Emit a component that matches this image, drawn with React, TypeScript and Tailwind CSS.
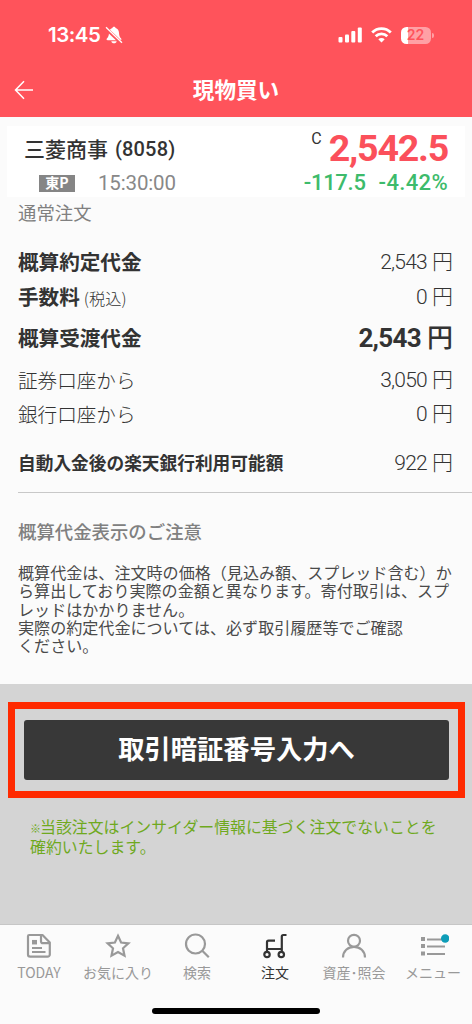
import type { ReactNode } from "react";
import clsx from "clsx";

interface CostRow {
  label: string;
  note?: string;
  value: string;
  row: string;
  labelClass: string;
  valueClass: string;
  yenClass: string;
}

const labelBold = "text-[20.6px] font-bold";
const labelLight = "text-[19.6px] font-light";
const valueLight = "text-[21px] font-light tracking-[-0.75px]";
const yenLight = "ml-[5px] text-[21px] font-light";

const costRows: CostRow[] = [
  { label: "概算約定代金", value: "2,543", row: "h-9", labelClass: labelBold, valueClass: valueLight, yenClass: yenLight },
  { label: "手数料", note: "(税込)", value: "0", row: "h-[34px]", labelClass: labelBold, valueClass: valueLight, yenClass: yenLight },
  {
    label: "概算受渡代金",
    value: "2,543",
    row: "h-12",
    labelClass: labelBold,
    valueClass: "text-[26px] font-bold tracking-[-0.7px]",
    yenClass: "ml-1.5 text-[26px] font-medium",
  },
  { label: "証券口座から", value: "3,050", row: "h-9", labelClass: labelLight, valueClass: valueLight, yenClass: yenLight },
  { label: "銀行口座から", value: "0", row: "h-[33px]", labelClass: labelLight, valueClass: valueLight, yenClass: yenLight },
  {
    label: "自動入金後の楽天銀行利用可能額",
    value: "922",
    row: "h-16",
    labelClass: "text-[17.7px] font-bold",
    valueClass: valueLight,
    yenClass: yenLight,
  },
];

function TodayIcon() {
  return (
    <svg width="26" height="26" viewBox="0 0 26 26" fill="none" stroke="currentColor" strokeWidth="2.2" strokeLinejoin="round">
      <path d="M3.2 2h13.3l7.3 7.4v12a2.3 2.3 0 0 1-2.3 2.3H4.2A2.2 2.2 0 0 1 2 21.5V3.2A1.2 1.2 0 0 1 3.2 2Z" />
      <path d="M15 2.500v5.700a2 2 0 0 0 2 2h6.500" />
      <path d="M6 15h10M6 19h13.500" />
      <path d="M6 9.200h5" strokeWidth="4.5" strokeLinejoin="miter" />
    </svg>
  );
}

function StarIcon() {
  return (
    <svg width="26" height="26" viewBox="0 0 26 26" fill="none" stroke="currentColor" strokeWidth="2.2">
      <path d="m13 2.800 3.100 6.700 7.300.8-5.400 5 1.500 7.400-6.500-3.700-6.500 3.700 1.500-7.400-5.400-5 7.300-.8Z" />
    </svg>
  );
}

function SearchIcon() {
  return (
    <svg width="26" height="26" viewBox="0 0 26 26" fill="none" stroke="currentColor" strokeWidth="2.2">
      <circle cx="11.5" cy="11" r="9.5" />
      <path d="m18 17.500 6.800 6.800" />
    </svg>
  );
}

function CartIcon() {
  return (
    <svg width="26" height="26" viewBox="0 0 26 26" fill="none" stroke="currentColor" strokeWidth="2.2">
      <path d="M24.500 2h-3.200a1.500 1.500 0 0 0-1.500 1.500v15.300M13 7.700H6.500A1.500 1.500 0 0 0 5 9.200v9.600M5 16h14.800" />
      <circle cx="5" cy="21.500" r="2.700" />
      <circle cx="19.300" cy="21.500" r="2.700" />
    </svg>
  );
}

function PersonIcon() {
  return (
    <svg width="26" height="26" viewBox="0 0 26 26" fill="none" stroke="currentColor" strokeWidth="2.2">
      <circle cx="13" cy="7.800" r="6" />
      <path d="M2 24.500c0-6.200 4.900-10.700 11-10.700s11 4.500 11 10.700" />
    </svg>
  );
}

function MenuIcon() {
  return (
    <svg width="32" height="26" viewBox="0 0 32 26" fill="none" stroke="currentColor" strokeWidth="2">
      <path d="M10 6.500h18M10 13.500h18M10 21h18" />
      <path d="M4 6h4M4 13h4M4 20.500h4" strokeWidth="3.800" />
      <circle cx="28.200" cy="5.500" r="4.200" fill="#0e9db8" stroke="none" />
    </svg>
  );
}

const tabs: { label: string; icon: ReactNode; width: string; active?: boolean }[] = [
  { label: "TODAY", icon: <TodayIcon />, width: "w-[78px]" },
  { label: "お気に入り", icon: <StarIcon />, width: "w-20" },
  { label: "検索", icon: <SearchIcon />, width: "w-[78px]" },
  { label: "注文", icon: <CartIcon />, width: "w-[78px]", active: true },
  { label: "資産･照会", icon: <PersonIcon />, width: "w-20" },
  { label: "メニュー", icon: <MenuIcon />, width: "w-[78px]" },
];

function StatusBar() {
  return (
    <div className="flex h-[70px] items-center justify-between pl-12 pr-[38px]">
      <div className="flex items-center gap-[5px]">
        <span className="font-[Inter] text-[20.5px] leading-none font-semibold tracking-[-0.5px]">13:45</span>
        <svg width="18" height="18" viewBox="0 0 18 18" fill="currentColor">
          <path d="M9 .8c.8 0 1.400.5 1.600 1.200 2.200.7 3.300 2.500 3.400 4.800.1 3.300.8 4.400 2.100 5.800.7.8.3 1.700-.8 1.700H2.700c-1.100 0-1.500-.9-.8-1.700C3.200 11.200 3.900 10.100 4 6.800c.1-2.300 1.200-4.100 3.400-4.800C7.600 1.300 8.200.8 9 .8ZM6.300 15.200h5.400c-.3 1.300-1.300 2.100-2.700 2.100s-2.400-.8-2.700-2.100Z" />
          <path d="m1 2.500 15.500 14.500" stroke="#ff535b" strokeWidth="3.500" />
          <path d="m1 1.300 16 15.500" stroke="currentColor" strokeWidth="1.300" />
        </svg>
      </div>
      <div className="flex items-center">
        <svg width="25" height="16" viewBox="0 0 25 16" fill="currentColor">
          <rect x="0.500" y="10" width="4" height="5.500" rx="1" />
          <rect x="7" y="7.500" width="4" height="8" rx="1" />
          <rect x="13.300" y="4" width="4" height="11.500" rx="1" />
          <rect x="19.800" y="0.500" width="4" height="15" rx="1" />
        </svg>
        <svg className="ml-2" width="21" height="16" viewBox="0 0 21 16" fill="none" stroke="currentColor" strokeWidth="2.800">
          <path d="M1.200 5.500c5.200-5.100 13.400-5.100 18.600 0M4.700 9.200c3.200-3.200 8.400-3.200 11.600 0" />
          <path d="m10.500 15.500-3.200-3.300c1.800-1.600 4.600-1.600 6.400 0Z" fill="currentColor" stroke="none" />
        </svg>
        <div className="ml-[9px] flex h-[17px] w-[30px] items-center justify-center rounded-[5.5px] bg-linear-to-r from-white from-22% to-[#ffa0a5] to-22% pr-px font-[Inter] text-sm leading-none font-semibold text-[#ff535b]">
          22
        </div>
        <div className="ml-px h-[5px] w-0.5 rounded-r-full bg-[#ffa0a5]" />
      </div>
    </div>
  );
}

function StockSummary() {
  return (
    <section className="mx-[7px] mt-[9px] flex h-[71px] justify-between bg-white pl-[17px] pr-[17px]">
      <div>
        <div className="flex h-[45px] items-center text-[21px] font-medium text-[#333]">
          三菱商事
          <span className="ml-[7px] font-[Roboto] text-xl tracking-[0.15px]">(8058)</span>
        </div>
        <div className="flex h-[24px] items-center pl-[15px] text-[#888]">
          <span className="flex h-[17px] w-9 items-center justify-center bg-[#858585] pb-0.5 text-[14px] leading-none font-bold text-white">
            東P
          </span>
          <span className="ml-[23px] font-[Roboto] text-[20.5px] tracking-[-0.15px]">15:30:00</span>
        </div>
      </div>
      <div className="flex flex-col items-end whitespace-nowrap">
        <div className="flex h-[45px] items-start">
          <span className="mt-[3px] mr-[7px] font-[Roboto] text-[16px] leading-5 text-[#333]">C</span>
          <span className="font-[Roboto] text-[37.5px] leading-[45px] font-bold tracking-[-1.2px] text-[#fb505b]">2,542.5</span>
        </div>
        <div className="flex h-[24px] items-center gap-[13px] pb-0.5 font-[Roboto] text-[22px] font-medium text-[#3dbb6b]">
          <span className="tracking-[-0.3px]">-117.5</span>
          <span className="tracking-[0.35px]">-4.42%</span>
        </div>
      </div>
    </section>
  );
}

function CostRowView({ label, note, value, row, labelClass, valueClass, yenClass }: CostRow) {
  return (
    <div className={clsx("flex items-center justify-between leading-none whitespace-nowrap", row)}>
      <div className="flex items-baseline pb-px">
        <span className={labelClass}>{label}</span>
        {note && <span className="ml-1 text-[16.3px] font-light">{note}</span>}
      </div>
      <div className="flex items-baseline pr-px pb-0.5">
        <span className={clsx("font-[Roboto]", valueClass)}>{value}</span>
        <span className={yenClass}>円</span>
      </div>
    </div>
  );
}

export default function App() {
  return (
    <div className="flex h-[1024px] w-[472px] flex-col overflow-hidden bg-[#fbfbfb] font-['Noto_Sans_CJK_JP',sans-serif] text-[#333]">
      <header className="h-[117px] shrink-0 bg-[#ff535b] text-white">
        <StatusBar />
        <div className="grid h-[40px] grid-cols-[1fr_auto_1fr] items-center">
          <svg className="ml-[14px]" width="20" height="20" viewBox="0 0 20 20" fill="none" stroke="currentColor" strokeWidth="1.5">
            <path d="M19 10H2M10 1.200 1.500 10l8.500 8.800" />
          </svg>
          <h1 className="pb-[3px] text-[21.6px] leading-none font-bold">現物買い</h1>
        </div>
      </header>

      <StockSummary />

      <main className="flex h-[487px] shrink-0 flex-col px-[18px]">
        <h2 className="flex h-[30px] items-center text-[18.4px] leading-none font-normal text-[#808080]">通常注文</h2>
        <div className="mt-[17px]">
          {costRows.map((r) => (
            <CostRowView key={r.label} {...r} />
          ))}
        </div>
        <div className="-mt-[3px] -mr-[18px] border-t border-[#c8c8c8]" />
        <h2 className="mt-[27px] text-[18.4px] leading-[22px] font-medium text-[#808080]">概算代金表示のご注意</h2>
        <p className="mt-[21px] text-[16.07px] leading-[18.3px] font-normal whitespace-nowrap text-[#4a4a4a]">
          概算代金は、注文時の価格（見込み額、スプレッド含む）か
          <br />
          ら算出しており実際の金額と異なります。寄付取引は、スプ
          <br />
          レッドはかかりません。
          <br />
          実際の約定代金については、必ず取引履歴等でご確認
          <br />
          ください。
        </p>
      </main>

      <section className="h-[240px] shrink-0 bg-[#d4d4d4] pt-[18px]">
        <div className="ml-2 h-24 w-[457px] border-[7px] border-[#ff2a00] px-[9px] py-[11px]">
          <button className="flex h-[60px] w-full items-center justify-center rounded-[3px] bg-[#383838] pb-[3px] text-[26.3px] leading-none font-bold text-white">
            取引暗証番号入力へ
          </button>
        </div>
        <p className="mt-[20px] ml-[30px] text-[15.9px] leading-[18.5px] whitespace-nowrap text-[#6fa91e]">
          <span className="mr-[-1px] text-[11px] font-bold">※</span>
          当該注文はインサイダー情報に基づく注文でないことを
          <br />
          確約いたします。
        </p>
      </section>

      <nav className="flex h-[78px] shrink-0 border-t border-[#c6c6c6] pt-2">
        {tabs.map((tab) => (
          <div key={tab.label} className={clsx("flex flex-col items-center", tab.width, tab.active ? "text-[#333]" : "text-[#999]")}>
            {tab.icon}
            <span className="mt-[5px] text-[14px] leading-4 font-normal whitespace-nowrap">{tab.label}</span>
          </div>
        ))}
      </nav>
      <div className="mx-auto mt-[6px] h-1.5 w-[168px] rounded-full bg-black" />
    </div>
  );
}
